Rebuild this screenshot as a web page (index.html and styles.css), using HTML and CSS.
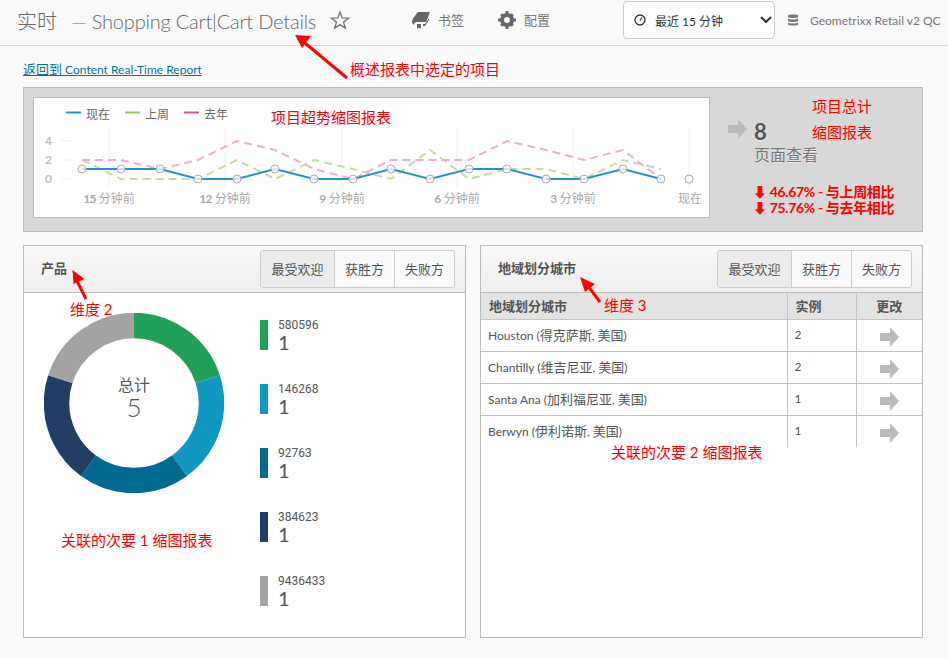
FILE: index.html
```html
<!DOCTYPE html>
<html lang="zh">
<head>
    <meta charset="UTF-8">
    <title>实时 — Shopping Cart|Cart Details</title>
    <link rel="stylesheet" href="styles.css">
</head>
<body>
    <header class="topbar">
        <h1 class="title">实时<span class="title-rest">— Shopping Cart|Cart Details</span></h1>
        <svg class="star" width="20" height="20" viewBox="0 0 20 20"><path d="M10 2l2.2 5.900 6.300.3-4.900 3.900 1.700 6.100-5.300-3.500-5.300 3.500 1.700-6.100-4.900-3.900 6.300-.3z"/></svg>
        <a class="tool tool-bookmark">
            <svg width="18" height="18" viewBox="0 0 18 18" fill="#666"><path d="M6 1h12l-4 10H5c-2 0-3 1-3 3L0 12c0-2 .5-4 2-6z"/><path d="M5 13h4v5l-2-1.500L5 18z"/><path d="M11 13h2l4-6v2l-4 6h-2z"/></svg>
            书签
        </a>
        <a class="tool tool-config">
            <svg width="18" height="18" viewBox="0 0 18 18"><circle cx="9" cy="9" r="5" fill="none" stroke="#666" stroke-width="4"/><path d="M7.500 0h3v4h-3zM7.500 14h3v4h-3zM0 7.500h4v3H0zM14 7.500h4v3h-4zM2.200 4.300l2.100-2.100 2.800 2.800L5 7.100zM13 10.900l2.800 2.800-2.100 2.100-2.800-2.800zM13.700 2.200l2.100 2.100L13 7.100l-2.100-2.100zM5 10.900l2.100 2.100-2.800 2.800-2.100-2.100z" fill="#666"/></svg>
            配置
        </a>
        <div class="range">
            <svg width="12" height="12" viewBox="0 0 12 12"><circle cx="6" cy="6" r="5" fill="none" stroke="#333" stroke-width="1.300"/><path d="M6 6.500L8 3.500" stroke="#333" stroke-width="1.300"/></svg>
            <span class="range-text">最近 15 分钟</span>
            <svg class="chevron" width="12" height="8" viewBox="0 0 12 8"><path d="M1 1l5 5 5-5" fill="none" stroke="#333" stroke-width="2"/></svg>
        </div>
        <svg class="db" width="10" height="12" viewBox="0 0 10 12"><path d="M0 1.500C0 .3 10 .3 10 1.500V3C10 4.300 0 4.300 0 3zM0 4.500c2 1.300 8 1.300 10 0V7c-2 1.300-8 1.300-10 0zM0 8.500c2 1.300 8 1.300 10 0V10.500c0 1.300-10 1.300-10 0z" fill="#777"/></svg>
        <span class="suite">Geometrixx Retail v2 QC</span>
    </header>

    <main class="content">
        <a class="back-link"><span class="zh">返回到</span> Content Real-Time Report</a>

        <section class="summary">
            <div class="trend">
                <svg width="675" height="119" viewBox="34 98 675 119">
                    <g class="grid">
                        <path d="M109 127V187M225 127V187M342 127V187M457 127V187M573 127V187M689 127V187"/>
                        <path d="M61 140.500H71M61 160H71M61 179H71"/>
                    </g>
                    <g class="legend">
                        <path d="M66 112.500H81" stroke="#2b8fcb"/>
                        <text x="86" y="119">现在</text>
                        <path d="M125 112.500H140" stroke="#9ac85a"/>
                        <text x="145" y="119">上周</text>
                        <path d="M184 112.500H199" stroke="#d6539f"/>
                        <text x="204" y="119">去年</text>
                    </g>
                    <g class="y-labels">
                        <text x="45" y="145">4</text>
                        <text x="45" y="164">2</text>
                        <text x="45" y="183">0</text>
                    </g>
                    <polyline class="series dashed" stroke="#bfdf9c" points="82,160 121,179 160,179 198,179 237,160 275,179 314,160 353,169 391,179 430,150 469,179 507,169 546,169 584,179 623,160 661,169"/>
                    <polyline class="series dashed" stroke="#efa9d2" points="82,160 121,160 160,169 198,160 237,141 275,150 314,169 353,179 391,160 430,160 469,160 507,141 546,150 584,160 623,150 661,179"/>
                    <polyline class="series" stroke="#2b8fcb" points="82,169 121,169 160,169 198,179 237,179 275,169 314,179 353,179 391,169 430,179 469,169 507,169 546,179 584,179 623,169 661,179"/>
                    <g class="dots">
                        <circle cx="82" cy="169" r="4"/><circle cx="121" cy="169" r="4"/><circle cx="160" cy="169" r="4"/><circle cx="198" cy="179" r="4"/>
                        <circle cx="237" cy="179" r="4"/><circle cx="275" cy="169" r="4"/><circle cx="314" cy="179" r="4"/><circle cx="353" cy="179" r="4"/>
                        <circle cx="391" cy="169" r="4"/><circle cx="430" cy="179" r="4"/><circle cx="469" cy="169" r="4"/><circle cx="507" cy="169" r="4"/>
                        <circle cx="546" cy="179" r="4"/><circle cx="584" cy="179" r="4"/><circle cx="623" cy="169" r="4"/><circle cx="661" cy="179" r="4"/>
                        <circle cx="689" cy="179" r="4"/>
                    </g>
                    <g class="x-labels">
                        <text x="109" y="203"><tspan class="num">15</tspan> 分钟前</text>
                        <text x="225" y="203"><tspan class="num">12</tspan> 分钟前</text>
                        <text x="342" y="203"><tspan class="num">9</tspan> 分钟前</text>
                        <text x="457" y="203"><tspan class="num">6</tspan> 分钟前</text>
                        <text x="573" y="203"><tspan class="num">3</tspan> 分钟前</text>
                        <text x="690" y="203">现在</text>
                    </g>
                </svg>
            </div>
            <div class="total">
                <svg class="arrow" width="19" height="20" viewBox="0 0 19 20"><path d="M0 6h10V0l9 10-9 10v-6H0z"/></svg>
                <div class="total-num">
                    <div class="total-value">8</div>
                    <div class="total-label">页面查看</div>
                </div>
            </div>
        </section>

        <div class="panels">
            <section class="panel">
                <div class="panel-head">
                    <h2>产品</h2>
                    <div class="tabs">
                        <span class="tab active">最受欢迎</span>
                        <span class="tab">获胜方</span>
                        <span class="tab">失败方</span>
                    </div>
                </div>
                <div class="donut-wrap">
                    <div class="donut">
                        <svg width="180" height="180" viewBox="0 0 180 180">
                            <g class="slices" transform="rotate(-90 90 90)">
                                <circle cx="90" cy="90" r="77.500" pathLength="100" stroke="#21a05a" stroke-dasharray="20 80"/>
                                <circle cx="90" cy="90" r="77.500" pathLength="100" stroke="#1098c0" stroke-dasharray="20 80" stroke-dashoffset="-20"/>
                                <circle cx="90" cy="90" r="77.500" pathLength="100" stroke="#006a90" stroke-dasharray="20 80" stroke-dashoffset="-40"/>
                                <circle cx="90" cy="90" r="77.500" pathLength="100" stroke="#233e64" stroke-dasharray="20 80" stroke-dashoffset="-60"/>
                                <circle cx="90" cy="90" r="77.500" pathLength="100" stroke="#a3a3a3" stroke-dasharray="20 80" stroke-dashoffset="-80"/>
                            </g>
                        </svg>
                        <div class="donut-center">
                            <div class="donut-label">总计</div>
                            <div class="donut-value">5</div>
                        </div>
                    </div>
                    <ul class="keys">
                        <li class="key"><i class="swatch c1"></i><div><div class="key-name">580596</div><div class="key-value">1</div></div></li>
                        <li class="key"><i class="swatch c2"></i><div><div class="key-name">146268</div><div class="key-value">1</div></div></li>
                        <li class="key"><i class="swatch c3"></i><div><div class="key-name">92763</div><div class="key-value">1</div></div></li>
                        <li class="key"><i class="swatch c4"></i><div><div class="key-name">384623</div><div class="key-value">1</div></div></li>
                        <li class="key"><i class="swatch c5"></i><div><div class="key-name">9436433</div><div class="key-value">1</div></div></li>
                    </ul>
                </div>
            </section>

            <section class="panel">
                <div class="panel-head">
                    <h2>地域划分城市</h2>
                    <div class="tabs">
                        <span class="tab active">最受欢迎</span>
                        <span class="tab">获胜方</span>
                        <span class="tab">失败方</span>
                    </div>
                </div>
                <table class="cities">
                    <thead>
                        <tr><th>地域划分城市</th><th>实例</th><th class="center">更改</th></tr>
                    </thead>
                    <tbody>
                        <tr><td>Houston (<span class="zh">得克萨斯</span>, <span class="zh">美国</span>)</td><td>2</td><td class="center"><svg class="arrow" width="19" height="20" viewBox="0 0 19 20"><path d="M0 6h10V0l9 10-9 10v-6H0z"/></svg></td></tr>
                        <tr><td>Chantilly (<span class="zh">维吉尼亚</span>, <span class="zh">美国</span>)</td><td>2</td><td class="center"><svg class="arrow" width="19" height="20" viewBox="0 0 19 20"><path d="M0 6h10V0l9 10-9 10v-6H0z"/></svg></td></tr>
                        <tr><td>Santa Ana (<span class="zh">加利福尼亚</span>, <span class="zh">美国</span>)</td><td>1</td><td class="center"><svg class="arrow" width="19" height="20" viewBox="0 0 19 20"><path d="M0 6h10V0l9 10-9 10v-6H0z"/></svg></td></tr>
                        <tr><td>Berwyn (<span class="zh">伊利诺斯</span>, <span class="zh">美国</span>)</td><td>1</td><td class="center"><svg class="arrow" width="19" height="20" viewBox="0 0 19 20"><path d="M0 6h10V0l9 10-9 10v-6H0z"/></svg></td></tr>
                    </tbody>
                </table>
            </section>
        </div>
    </main>

    <!-- red callouts drawn over the screenshot -->
    <svg class="callout-arrows" width="948" height="658" viewBox="0 0 948 658">
        <path d="M347 78L305 43"/><path d="M295 35l16 1-9 12z" class="head"/>
        <path d="M86 299L77 281"/><path d="M72.500 270l12 9-11 5z" class="head"/>
        <path d="M600 302L588 286"/><path d="M580 277l15 7-10 8z" class="head"/>
    </svg>
    <span class="note n1">概述报表中选定的项目</span>
    <span class="note n2">项目超势缩图报表</span>
    <span class="note n3">项目总计</span>
    <span class="note n4">缩图报表</span>
    <span class="note delta n5">⬇ 46.67% - 与上周相比</span>
    <span class="note delta n6">⬇ 75.76% - 与去年相比</span>
    <span class="note n7">维度 2</span>
    <span class="note n8">维度 3</span>
    <span class="note n9">关联的次要 1 缩图报表</span>
    <span class="note n10">关联的次要 2 缩图报表</span>
</body>
</html>
```
FILE: styles.css
```css
* {
    box-sizing: border-box;
}
body {
    margin: 0;
    width: 948px;
    height: 658px;
    overflow: hidden;
    position: relative;
    background: #fafafa;
    color: #555;
    font-family: Lato, "Noto Sans CJK SC", sans-serif;
    font-size: 12px;
}
.zh {
    font-size: 13px;
}
.topbar {
    display: flex;
    align-items: center;
    height: 46px;
    padding: 0 0 6px 17px;
    border-bottom: 1px solid #d5d5d5;
}
.title {
    margin: 2px 0 0;
    width: 300px;
    white-space: nowrap;
    font-size: 20px;
    font-weight: 300;
    color: #666;
}
.title-rest {
    margin-left: 14px;
    letter-spacing: -0.2px;
}
.star {
    margin-left: 13px;
    fill: none;
    stroke: #777;
    stroke-width: 1.4;
}
.tool {
    display: flex;
    align-items: center;
    gap: 8px;
    font-size: 13px;
    color: #777;
}
.tool-bookmark {
    margin-left: 62px;
}
.tool-config {
    margin-left: 34px;
}
.range {
    display: flex;
    align-items: center;
    width: 152px;
    height: 38px;
    margin: 1px 0 0 73px;
    padding: 0 2px 0 10px;
    background: #fff;
    border: 1px solid #ccc;
    border-radius: 4px;
    color: #333;
}
.range-text {
    margin-left: 9px;
}
.chevron {
    margin-left: auto;
}
.db {
    margin-left: 13px;
}
.suite {
    margin: 2px 0 0 12px;
    color: #777;
    white-space: nowrap;
}
.content {
    padding: 15px 25px 0 23px;
}
.back-link {
    display: block;
    height: 26px;
    line-height: 16px;
    color: #0a7096;
    text-decoration: underline;
}
.summary {
    display: flex;
    height: 145px;
    padding: 9px;
    background: #d8d8d8;
    border: 1px solid #bbb;
}
.trend {
    width: 677px;
    height: 121px;
    background: #fff;
    border: 1px solid #bbb;
}
.trend svg {
    display: block;
}
.grid path {
    fill: none;
    stroke: #eee;
    stroke-width: 1;
}
.legend path {
    stroke-width: 2;
}
.legend text {
    font-size: 12px;
    fill: #666;
}
.y-labels text {
    font-size: 12px;
    font-weight: 700;
    fill: #bbb;
}
.series {
    fill: none;
    stroke-width: 2;
}
.dashed {
    stroke-dasharray: 8 5;
}
.dots circle {
    fill: rgba(255, 255, 255, 0.75);
    stroke: #aaa;
    stroke-width: 1;
}
.x-labels text {
    font-size: 12px;
    fill: #aaa;
    text-anchor: middle;
}
.x-labels .num {
    font-weight: 700;
    letter-spacing: -0.7px;
}
.total {
    display: flex;
    margin-left: 18px;
    padding-top: 22px;
}
.arrow {
    fill: #bbb;
    display: block;
}
.total-num {
    margin-left: 7px;
}
.total-value {
    font-size: 22px;
    line-height: 25px;
    font-weight: 700;
    color: #555;
    text-shadow: 0 1px 0 #eee;
}
.total-label {
    font-size: 16px;
    line-height: 22px;
    color: #777;
    text-shadow: 0 1px 0 #eee;
}
.panels {
    display: flex;
    gap: 14px;
    margin-top: 13px;
}
.panel {
    width: 443px;
    height: 393px;
    background: #fff;
    border: 1px solid #bbb;
}
.panel-head {
    display: flex;
    align-items: center;
    justify-content: space-between;
    height: 47px;
    padding: 0 10px 0 17px;
    background: linear-gradient(#f9f9f9, #eee);
    border-bottom: 1px solid #bbb;
}
.panel-head h2 {
    margin: 0 0 3px;
    font-size: 13px;
    font-weight: 700;
    color: #555;
}
.tabs {
    display: flex;
    height: 38px;
    border: 1px solid #ccc;
    border-radius: 3px;
    background: #fafafa;
    overflow: hidden;
}
.tab {
    display: flex;
    align-items: center;
    justify-content: center;
    width: 60px;
    padding-bottom: 2px;
    border-left: 1px solid #ccc;
    font-size: 13px;
    color: #555;
}
.tab.active {
    width: 73px;
    border-left: 0;
    background: #ececec;
}
.donut-wrap {
    display: flex;
    padding: 20px 0 0 20px;
}
.donut {
    position: relative;
    width: 180px;
    height: 180px;
}
.donut svg {
    display: block;
}
.slices circle {
    fill: none;
    stroke-width: 25.5;
}
.donut-center {
    position: absolute;
    inset: 0;
    display: flex;
    flex-direction: column;
    align-items: center;
    justify-content: center;
    padding-bottom: 10px;
}
.donut-label {
    font-size: 16px;
    line-height: 18px;
}
.donut-value {
    font-size: 26px;
    line-height: 26px;
    font-weight: 300;
}
.keys {
    list-style: none;
    margin: 7px 0 0 36px;
    padding: 0;
}
.key {
    display: flex;
    height: 64px;
}
.swatch {
    display: block;
    width: 8px;
    height: 30px;
    margin-right: 10px;
}
.c1 { background: #21a05a; }
.c2 { background: #1098c0; }
.c3 { background: #006a90; }
.c4 { background: #233e64; }
.c5 { background: #a3a3a3; }
.key-name {
    font-family: Roboto, sans-serif;
    font-size: 12px;
    line-height: 12px;
    margin-top: -1px;
}
.key-value {
    font-size: 20px;
    line-height: 22px;
}
.cities {
    width: 100%;
    border-collapse: collapse;
    table-layout: fixed;
}
.cities th {
    height: 26px;
    padding: 0 8px;
    text-align: left;
    font-size: 13px;
    font-weight: 700;
    background: #e3e3e3;
    border-left: 1px solid #c4c4c4;
}
.cities th:nth-child(1) { width: 306px; border-left: 0; }
.cities th:nth-child(2) { width: 69px; }
.cities td {
    height: 32px;
    padding: 0 7px 1px;
    border-left: 1px solid #c4c4c4;
    border-top: 1px solid #c4c4c4;
}
.cities td:first-child {
    border-left: 0;
}
.cities .center {
    text-align: center;
}
.cities td.center {
    padding-top: 4px;
}
.cities td .arrow {
    margin: 0 auto;
}
.callout-arrows {
    position: absolute;
    top: 0;
    left: 0;
    fill: none;
    stroke: #f00;
    stroke-width: 3;
}
.callout-arrows .head {
    fill: #f00;
    stroke: none;
}
.note {
    position: absolute;
    font-size: 15px;
    line-height: 16px;
    color: #f00;
    white-space: nowrap;
}
.delta {
    font-size: 14px;
    font-weight: 700;
    letter-spacing: -0.35px;
}
.n1 { left: 350px; top: 61px; }
.n2 { left: 271px; top: 109px; }
.n3 { left: 812px; top: 98px; }
.n4 { left: 812px; top: 124px; }
.n5 { left: 753px; top: 184px; }
.n6 { left: 753px; top: 200px; }
.n7 { left: 70px; top: 301px; }
.n8 { left: 604px; top: 297px; }
.n9 { left: 61px; top: 532px; }
.n10 { left: 611px; top: 444px; }
```
